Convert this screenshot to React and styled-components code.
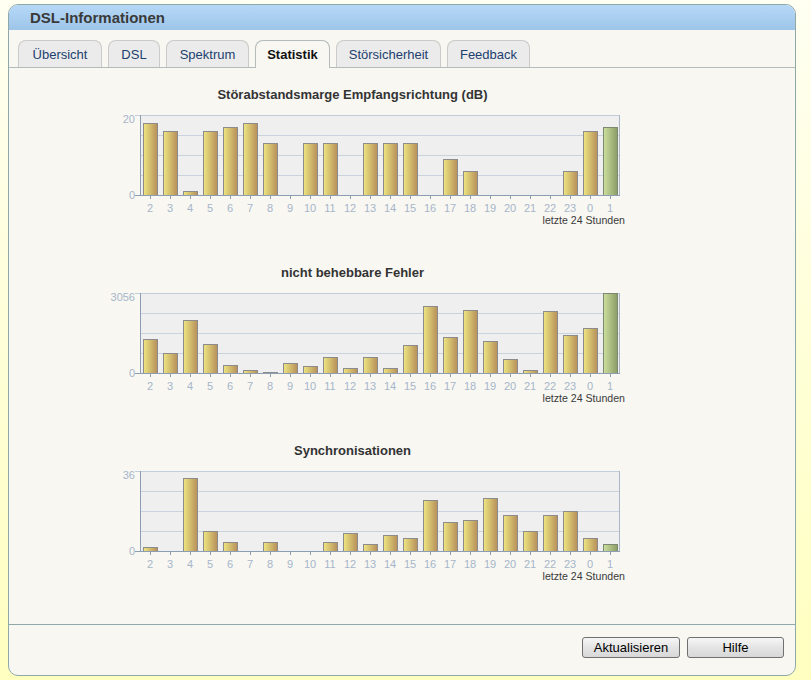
import React from "react";
import styled, { createGlobalStyle } from "styled-components";

const GlobalStyle = createGlobalStyle`
  html, body {
    margin: 0;
    padding: 0;
  }
  body {
    min-height: 680px;
    background: linear-gradient(to bottom, #fffff2 0%, #ffffd8 50%, #ffffc0 100%);
    font-family: "Liberation Sans", Arial, sans-serif;
  }
`;

const hours = [2, 3, 4, 5, 6, 7, 8, 9, 10, 11, 12, 13, 14, 15, 16, 17, 18, 19, 20, 21, 22, 23, 0, 1];

const charts = [
  {
    title: "Störabstandsmarge Empfangsrichtung (dB)",
    max: 20,
    values: [18, 16, 1, 16, 17, 18, 13, 0, 13, 13, 0, 13, 13, 13, 0, 9, 6, 0, 0, 0, 0, 6, 16, 17],
  },
  {
    title: "nicht behebbare Fehler",
    max: 3056,
    values: [1299, 764, 2025, 1108, 306, 115, 38, 382, 267, 611, 191, 611, 191, 1070, 2559, 1375, 2407, 1222, 535, 115, 2368, 1452, 1719, 3056],
  },
  {
    title: "Synchronisationen",
    max: 36,
    values: [2, 0, 33, 9, 4, 0, 4, 0, 0, 4, 8, 3, 7, 6, 23, 13, 14, 24, 16, 9, 16, 18, 6, 3],
  },
];

const tabs = [
  { label: "Übersicht", w: 84 },
  { label: "DSL", w: 52 },
  { label: "Spektrum", w: 83 },
  { label: "Statistik", w: 75 },
  { label: "Störsicherheit", w: 105 },
  { label: "Feedback", w: 83 },
];

const Panel = styled.div`
  margin: 4px 0 0 8px;
  width: 788px;
  height: 672px;
  box-sizing: border-box;
  border: 1px solid #8fa9a9;
  border-radius: 10px;
  background: #f8f7f2;
  display: flex;
  flex-direction: column;
  overflow: hidden;
`;

const Header = styled.div`
  height: 25px;
  flex: none;
  background: linear-gradient(to bottom, #b6d8f7, #9dc5e8);
  padding-left: 21px;
  display: flex;
  align-items: center;
  font-size: 15px;
  font-weight: bold;
  color: #3a3a3a;
`;

const TabBar = styled.div`
  flex: none;
  display: flex;
  gap: 6px;
  padding: 10px 0 0 9px;
  border-bottom: 1px solid #b3bbbb;
`;

const Tab = styled.div`
  width: ${(p) => p.$w}px;
  box-sizing: border-box;
  display: flex;
  align-items: center;
  justify-content: center;
  font-size: 13px;
  border: 1px solid ${(p) => (p.$active ? "#b3bbbb" : "#cacaca")};
  border-bottom: none;
  border-radius: 8px 8px 0 0;
  margin-bottom: ${(p) => (p.$active ? "-1px" : "0")};
  height: ${(p) => (p.$active ? "28px" : "27px")};
  padding-bottom: ${(p) => (p.$active ? "1px" : "0")};
  background: ${(p) => (p.$active ? "#f8f7f2" : "#ebebeb")};
  color: ${(p) => (p.$active ? "#111" : "#22406e")};
  font-weight: ${(p) => (p.$active ? "bold" : "normal")};
`;

const Content = styled.div`
  flex: 1;
  display: flex;
  flex-direction: column;
  gap: 34px;
  padding: 18px 0 0 71px;
`;

const ChartBlock = styled.div`
  width: 545px;
  display: flex;
  flex-direction: column;
`;

const ChartTitle = styled.div`
  height: 19px;
  line-height: 17px;
  text-align: center;
  font-size: 13px;
  font-weight: bold;
  color: #333;
`;

const Footer = styled.div`
  flex: none;
  height: 51px;
  border-top: 1px solid #8fa9a9;
  display: flex;
  justify-content: flex-end;
  align-items: flex-start;
  gap: 7px;
  padding: 12px 11px 0 0;
  box-sizing: border-box;
`;

const Button = styled.button`
  width: ${(p) => p.$w}px;
  height: 21px;
  padding: 0;
  border: 1px solid #707070;
  border-radius: 3px;
  background: linear-gradient(to bottom, #f6f6f6, #e4e4e4 50%, #d8d8d8);
  font-family: "Liberation Sans", Arial, sans-serif;
  font-size: 13px;
  color: #000;
`;

const PX = 60;
const PY = 10;
const W = 480;
const H = 80;

function Chart({ max, values }) {
  return (
    <svg width="545" height="125" viewBox="0 0 545 125">
      <defs>
        <linearGradient id="barGold" x1="0" x2="1" y1="0" y2="0">
          <stop offset="0" stopColor="#eee682" />
          <stop offset="1" stopColor="#b68f5a" />
        </linearGradient>
        <linearGradient id="barGreen" x1="0" x2="1" y1="0" y2="0">
          <stop offset="0" stopColor="#cde09e" />
          <stop offset="1" stopColor="#8b9b66" />
        </linearGradient>
      </defs>
      <rect x={PX} y={PY} width={W} height={H} fill="#efefef" />
      {[1, 2, 3].map((i) => (
        <line key={i} x1={PX} x2={PX + W} y1={PY + i * 20 + 0.5} y2={PY + i * 20 + 0.5} stroke="#c9d3de" />
      ))}
      <line x1={PX - 5} x2={PX + W} y1={PY + 0.5} y2={PY + 0.5} stroke="#c2cdd9" />
      <line x1={PX + W - 0.5} x2={PX + W - 0.5} y1={PY} y2={PY + H} stroke="#a9b7c7" />
      {values.map((v, i) => {
        if (!v) return null;
        const h = Math.max(1, Math.round((v / max) * H));
        const last = i === values.length - 1;
        return (
          <rect
            key={i}
            x={PX + i * 20 + 3.5}
            y={PY + H - h + 0.5}
            width={14}
            height={h}
            fill={last ? "url(#barGreen)" : "url(#barGold)"}
            stroke={last ? "#7c8870" : "#8c8c8c"}
          />
        );
      })}
      <line x1={PX + 0.5} x2={PX + 0.5} y1={PY} y2={PY + H} stroke="#8e9eb2" />
      <line x1={PX - 5} x2={PX + W} y1={PY + H + 0.5} y2={PY + H + 0.5} stroke="#8e9eb2" />
      {hours.map((h, i) => (
        <line key={i} x1={PX + i * 20 + 10.5} x2={PX + i * 20 + 10.5} y1={PY + H} y2={PY + H + 4} stroke="#8e9eb2" />
      ))}
      <g fontFamily="Liberation Sans, Arial, sans-serif" fontSize="11" fill="#a6b6ca">
        <text x={PX - 5} y={PY + 8} textAnchor="end">{max}</text>
        <text x={PX - 5} y={PY + H + 4} textAnchor="end">0</text>
        {hours.map((h, i) => (
          <text key={i} x={PX + i * 20 + 10} y={PY + H + 17} textAnchor="middle">{h}</text>
        ))}
      </g>
      <text x="545" y={PY + H + 29} textAnchor="end" fontFamily="Liberation Sans, Arial, sans-serif" fontSize="10.6" fill="#3a3a3a">
        letzte 24 Stunden
      </text>
    </svg>
  );
}

export default function App() {
  return (
    <>
      <GlobalStyle />
      <Panel>
        <Header>DSL-Informationen</Header>
        <TabBar>
          {tabs.map((t) => (
            <Tab key={t.label} $w={t.w} $active={t.label === "Statistik"}>{t.label}</Tab>
          ))}
        </TabBar>
        <Content>
          {charts.map((c) => (
            <ChartBlock key={c.title}>
              <ChartTitle>{c.title}</ChartTitle>
              <Chart max={c.max} values={c.values} />
            </ChartBlock>
          ))}
        </Content>
        <Footer>
          <Button $w={98}>Aktualisieren</Button>
          <Button $w={97}>Hilfe</Button>
        </Footer>
      </Panel>
    </>
  );
}
